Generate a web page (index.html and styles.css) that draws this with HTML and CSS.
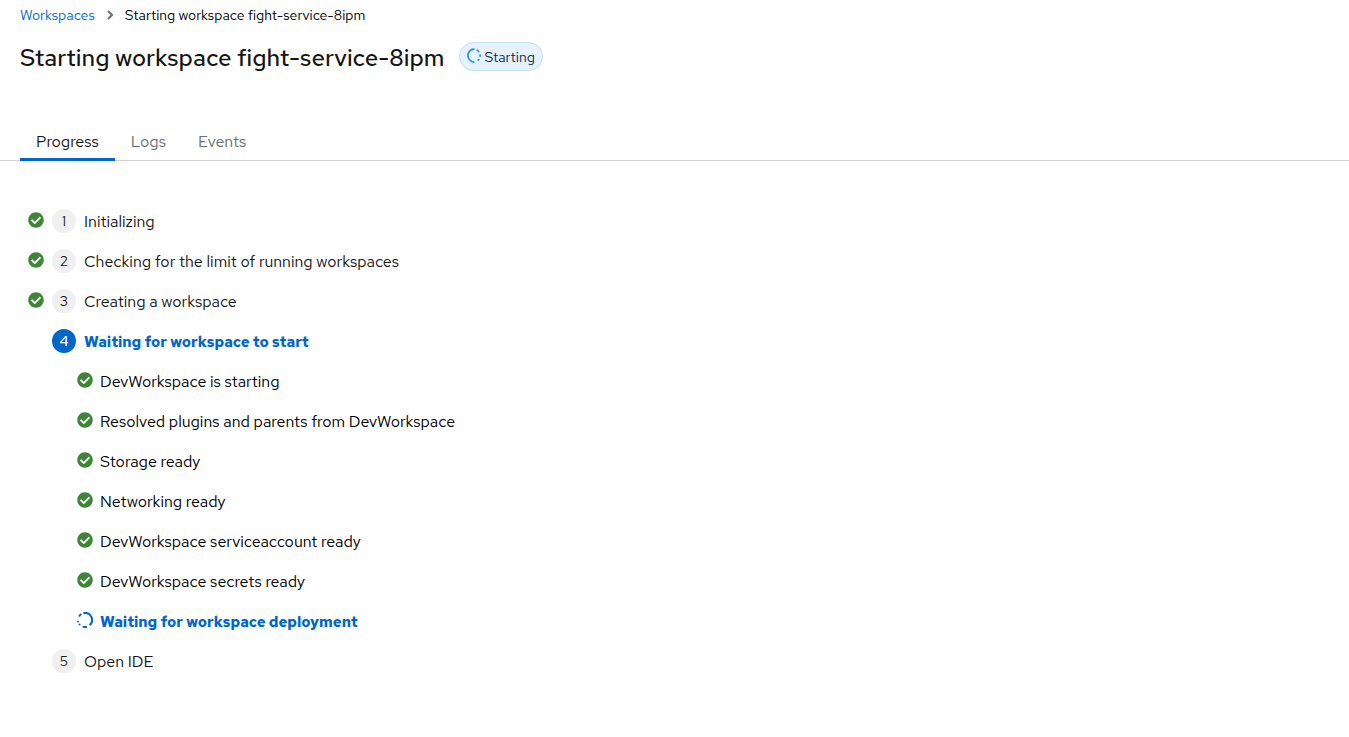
FILE: index.html
```html
<!DOCTYPE html>
<html lang="en">
<head>
<meta charset="utf-8">
<title>Starting workspace fight-service-8ipm</title>
<link rel="stylesheet" href="styles.css">
</head>
<body>
<svg class="sprite" aria-hidden="true">
  <symbol id="check" viewBox="0 0 512 512"><path d="M504 256c0 136.967-111.033 248-248 248S8 392.967 8 256 119.033 8 256 8s248 111.033 248 248zM227.314 387.314l184-184c6.248-6.248 6.248-16.379 0-22.627l-22.627-22.627c-6.248-6.249-16.379-6.249-22.628 0L216 308.118l-70.059-70.059c-6.248-6.248-16.379-6.248-22.628 0l-22.627 22.627c-6.248 6.248-6.248 16.379 0 22.627l104 104c6.249 6.249 16.379 6.249 22.628.001z"/></symbol>
</svg>
<header class="page-header">
  <nav aria-label="Breadcrumb">
    <ol class="breadcrumb">
      <li><a href="#workspaces">Workspaces</a></li>
      <li class="breadcrumb-current" aria-current="page"><svg class="chevron" viewBox="0 0 8 10" aria-hidden="true"><path d="M2 1l4 4-4 4"/></svg>Starting workspace fight-service-8ipm</li>
    </ol>
  </nav>
  <div class="title-row">
    <h1>Starting workspace fight-service-8ipm</h1>
    <span class="badge"><svg class="badge-icon" viewBox="0 0 16 16" aria-hidden="true"><path d="M9 1A7 7 0 1 0 9 15M11.4 1.8A7 7 0 0 1 13.8 4.2M15 6.8v2.4M14 11.6a7 7 0 0 1-1.6 1.8"/></svg><span class="label">Starting</span></span>
  </div>
</header>
<div class="tabs" role="tablist">
  <button class="tab tab-active" role="tab" aria-selected="true">Progress</button>
  <button class="tab" role="tab" aria-selected="false">Logs</button>
  <button class="tab" role="tab" aria-selected="false">Events</button>
</div>
<main>
  <ol class="steps">
    <li class="step"><svg class="check"><use href="#check"/></svg><span class="number">1</span><span class="label">Initializing</span></li>
    <li class="step"><svg class="check"><use href="#check"/></svg><span class="number">2</span><span class="label">Checking for the limit of running workspaces</span></li>
    <li class="step"><svg class="check"><use href="#check"/></svg><span class="number">3</span><span class="label">Creating a workspace</span></li>
    <li>
      <div class="step current"><span class="check"></span><span class="number">4</span><span class="label">Waiting for workspace to start</span></div>
      <ol class="substeps">
        <li class="substep"><svg class="check"><use href="#check"/></svg><span class="label">DevWorkspace is starting</span></li>
        <li class="substep"><svg class="check"><use href="#check"/></svg><span class="label">Resolved plugins and parents from DevWorkspace</span></li>
        <li class="substep"><svg class="check"><use href="#check"/></svg><span class="label">Storage ready</span></li>
        <li class="substep"><svg class="check"><use href="#check"/></svg><span class="label">Networking ready</span></li>
        <li class="substep"><svg class="check"><use href="#check"/></svg><span class="label">DevWorkspace serviceaccount ready</span></li>
        <li class="substep"><svg class="check"><use href="#check"/></svg><span class="label">DevWorkspace secrets ready</span></li>
        <li class="substep current"><svg class="check spinner" viewBox="0 0 16 16" aria-hidden="true"><path d="M6.4 1.2A7 7 0 0 1 12.6 13.3M9.8 14.8a7 7 0 0 1-4.2-.2M3 13l-.9-1.2M1.2 10.4l-.2-1.6M2 4.4a7 7 0 0 1 2.4-2.4"/></svg><span class="label">Waiting for workspace deployment</span></li>
      </ol>
    </li>
    <li class="step"><span class="check"></span><span class="number">5</span><span class="label">Open IDE</span></li>
  </ol>
</main>
</body>
</html>
```
FILE: styles.css
```css
* { box-sizing: border-box; }
body {
  margin: 0;
  background: #fff;
  color: #151515;
  font-family: "Red Hat Text", "Noto Sans", sans-serif;
  font-size: 16px;
  line-height: 24px;
}
ol { list-style: none; margin: 0; padding: 0; }
.sprite { display: none; }
.page-header { padding: 4px 20px 0; }
.breadcrumb { display: flex; font-size: 14px; line-height: 22px; color: #000; }
.breadcrumb a { color: #06c; text-decoration: none; }
.breadcrumb-current { display: flex; align-items: center; }
.chevron { width: 8px; height: 10px; margin: 0 11px; fill: none; stroke: #6a6e73; stroke-width: 2; }
.title-row { display: flex; align-items: center; gap: 15px; margin-top: 13px; }
h1 {
  margin: 0;
  padding-top: 2px;
  font-family: "Red Hat Text", "Noto Sans", sans-serif;
  font-size: 24px;
  font-weight: 500;
  line-height: 34px;
}
.badge {
  display: flex;
  align-items: center;
  gap: 3px;
  height: 29px;
  margin-bottom: 2px;
  padding: 0 7px 0 6px;
  border: 1px solid #bee1f4;
  border-radius: 15px;
  background: #e7f1fa;
  color: #002952;
  font-size: 14px;
}
.badge-icon { width: 15px; height: 15px; margin-bottom: 2px; fill: none; stroke: #2b9af3; stroke-width: 2; }
.tabs {
  display: flex;
  margin-top: 48px;
  padding: 0 20px;
  border-bottom: 1px solid #d2d2d2;
}
.tab {
  margin: 0 0 -1px;
  padding: 7px 16px 4px;
  border: 0;
  border-bottom: 3px solid transparent;
  background: none;
  color: #6a6e73;
  font: inherit;
}
.tab-active { border-bottom-color: #06c; color: #151515; }
main { padding: 40px 28px; }
.step, .substep { display: flex; align-items: center; gap: 8px; height: 40px; }
.substeps { padding-left: 49px; color: #000; }
.substep { gap: 7px; }
.label { padding-top: 2px; }
.check { flex: none; width: 16px; height: 16px; margin-bottom: 2px; fill: #3e8635; }
.spinner { fill: none; stroke: #06c; stroke-width: 2; }
.number {
  display: flex;
  align-items: center;
  justify-content: center;
  width: 24px;
  height: 24px;
  border-radius: 50%;
  background: #f0f0f0;
  font-size: 14px;
}
.current { color: #06c; font-size: 15px; font-weight: 700; }
.current .number { background: #06c; color: #fff; font-weight: 500; }
```
